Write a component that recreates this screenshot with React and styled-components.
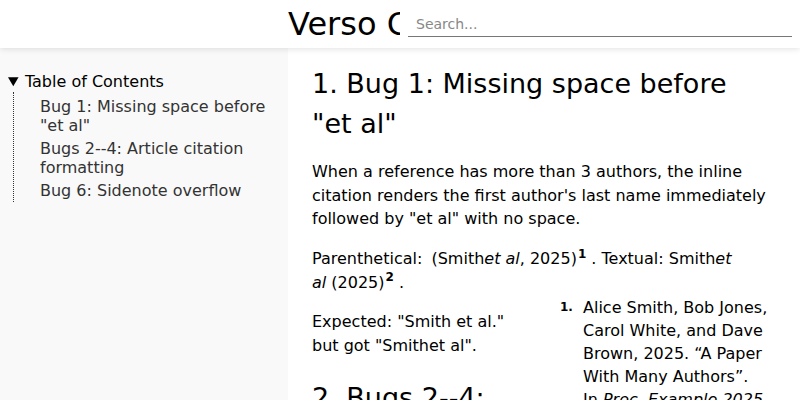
import styled, { createGlobalStyle } from "styled-components";

const Global = createGlobalStyle`
    html, body {
        margin: 0;
        padding: 0;
        background: #ffffff;
    }
    body {
        font-family: "DejaVu Sans", "Liberation Sans", sans-serif;
        color: #000;
    }
`

function App(){
    return(
        <>
            <Global/>
            <Page>
                <Header>
                    <HeaderSpacer/>
                    <SiteTitle>Verso Citations</SiteTitle>
                    <Search placeholder="Search..."/>
                </Header>
                <Body>
                    <Sidebar>
                        <Toc open>
                            <TocSummary>Table of Contents</TocSummary>
                            <TocList>
                                <TocItem>Bug 1: Missing space before "et al"</TocItem>
                                <TocItem>Bugs 2--4: Article citation formatting</TocItem>
                                <TocItem>Bug 6: Sidenote overflow</TocItem>
                            </TocList>
                        </Toc>
                    </Sidebar>
                    <Main>
                        <Heading first>1. Bug 1: Missing space before "et al"</Heading>
                        <Para>
                            When a reference has more than 3 authors, the inline citation renders the
                            first author's last name immediately followed by "et al" with no space.
                        </Para>
                        <Para inset="24px">
                            Parenthetical: <Cite>(Smith<em>et al</em>, 2025)<Mark>1</Mark></Cite> . Textual: Smith<em>et al</em> (2025)<Mark>2</Mark> .
                        </Para>
                        <Para>
                            <Sidenote>
                                <NoteNum>1.</NoteNum>
                                <NoteText>
                                    Alice Smith, Bob Jones, Carol White, and Dave Brown, 2025. “A Paper With Many Authors”.
                                    In <em>Proc. Example 2025</em>
                                </NoteText>
                            </Sidenote>
                            Expected: "Smith et al." but got "Smithet al".
                        </Para>
                        <Heading>2. Bugs 2--4: Article citation formatting</Heading>
                    </Main>
                </Body>
            </Page>
        </>
    )
}

const Page=styled.div`
    width: 800px;
    height: 400px;
    overflow: hidden;
    display: flex;
    flex-direction: column;
`
const Header=styled.header`
    height: 48px;
    flex-shrink: 0;
    display: flex;
    align-items: center;
    gap: 8px;
    padding: 0 8px;
    background: #fff;
    box-shadow: 0 1px 6px rgba(0, 0, 0, 0.12);
    position: relative;
    z-index: 2;
`
const HeaderSpacer=styled.div`
    width: 272px;
    flex-shrink: 0;
`
const SiteTitle=styled.h1`
    margin: 0;
    width: 112px;
    flex-shrink: 0;
    overflow: hidden;
    white-space: nowrap;
    font-size: 32px;
    font-weight: normal;
`
const Search=styled.input`
    flex: 1;
    height: 26px;
    box-sizing: border-box;
    border: none;
    border-bottom: 1px solid #777;
    padding: 0 8px;
    font-family: "DejaVu Sans", sans-serif;
    font-size: 14px;
    background: transparent;
    outline: none;
    &::placeholder{
        color: #888;
    }
`
const Body=styled.div`
    flex: 1;
    display: flex;
    min-height: 0;
`
const Sidebar=styled.nav`
    width: 288px;
    flex-shrink: 0;
    background: #f9f9f9;
    padding: 24px 8px 0 8px;
    box-sizing: border-box;
`
const Toc=styled.details`
    font-size: 16px;
    line-height: 19px;
`
const TocSummary=styled.summary`
    cursor: pointer;
`
const TocList=styled.ul`
    list-style: none;
    margin: 1px 0 0 5px;
    padding: 5px 0 2px 26px;
    border-left: 1px dotted #333;
    display: flex;
    flex-direction: column;
    gap: 4px;
`
const TocItem=styled.li`
    color: #333;
`
const Main=styled.main`
    flex: 1;
    padding: 0 32px 0 24px;
    overflow: hidden;
    font-size: 16px;
    line-height: 1.48;
`
const Heading=styled.h2`
    font-size: 27px;
    font-weight: normal;
    line-height: 40px;
    margin: ${(props)=>props.first ? "16px" : "20px"} 0 16px 0;
`
const Para=styled.p`
    margin: 16px 0;
    padding-right: ${(props)=>props.inset || "0"};
`
const Cite=styled.span`
    margin-left: 4px;
`
const Mark=styled.sup`
    font-size: 12px;
    font-weight: bold;
    line-height: 0;
    margin-left: 1px;
`
const Sidenote=styled.aside`
    float: right;
    width: 208px;
    margin: -14px 0 8px 32px;
    display: flex;
    line-height: 23px;
`
const NoteNum=styled.span`
    width: 23px;
    flex-shrink: 0;
    font-size: 12px;
    font-weight: bold;
    line-height: 12px;
    margin-top: 5px;
`
const NoteText=styled.span`
    flex: 1;
`
export default App;
